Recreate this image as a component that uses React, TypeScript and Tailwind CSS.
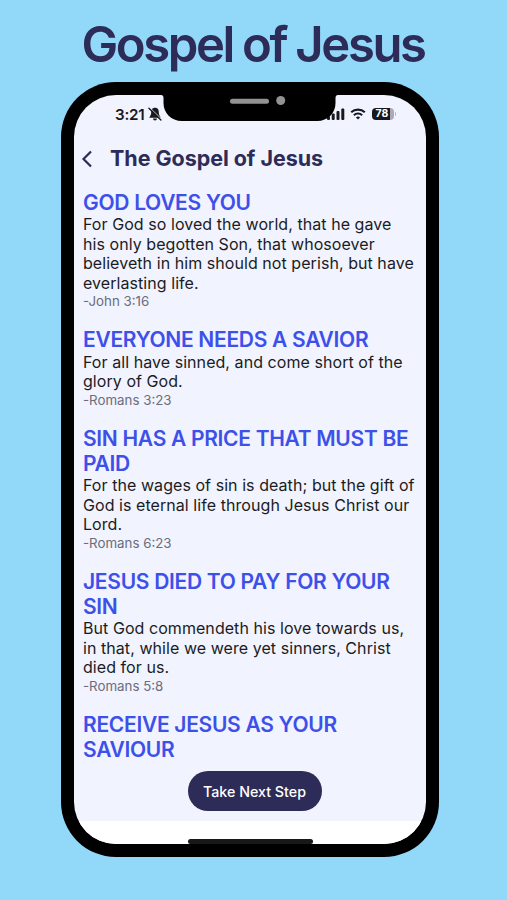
const SECTIONS = [
  {
    title: ['GOD LOVES YOU'],
    lines: [
      'For God so loved the world, that he gave',
      'his only begotten Son, that whosoever',
      'believeth in him should not perish, but have',
      'everlasting life.',
    ],
    verse: '-John 3:16',
  },
  {
    title: ['EVERYONE NEEDS A SAVIOR'],
    lines: ['For all have sinned, and come short of the', 'glory of God.'],
    verse: '-Romans 3:23',
  },
  {
    title: ['SIN HAS A PRICE THAT MUST BE', 'PAID'],
    lines: [
      'For the wages of sin is death; but the gift of',
      'God is eternal life through Jesus Christ our',
      'Lord.',
    ],
    verse: '-Romans 6:23',
  },
  {
    title: ['JESUS DIED TO PAY FOR YOUR', 'SIN'],
    lines: [
      'But God commendeth his love towards us,',
      'in that, while we were yet sinners, Christ',
      'died for us.',
    ],
    verse: '-Romans 5:8',
  },
  { title: ['RECEIVE JESUS AS YOUR', 'SAVIOUR'], lines: [], verse: '' },
];

function Notch() {
  return (
    <div className="absolute left-[83px] top-0 h-[26px] w-[185px]">
      <svg width="185" height="26" viewBox="0 0 185 26">
        <path
          d="M0 -1V0H4Q6.500 0 6.500 3V8C6.500 18 14 26 25 26H160C171 26 178.500 18 178.500 8V3Q178.500 0 181 0H185V-1Z"
          fill="#000"
        />
        <rect x="73" y="3.700" width="39" height="5" rx="2.500" fill="#929292" />
        <circle cx="123.700" cy="5.500" r="4.500" fill="#929292" />
      </svg>
    </div>
  );
}

function StatusBar() {
  return (
    <div className="flex h-[38px] items-center pl-[41px] pr-[30px] text-[#18191f]">
      <span className="w-[31px] pt-px text-[15.2px] font-semibold leading-none tracking-[-0.2px]">3:21</span>
      <svg width="14" height="14" viewBox="0 0 14 14" className="ml-[1.5px]">
        <path d="M7 0.8C4 0.8 3.200 3 3.200 5.500C3.200 8 2.200 8.700 1.200 10.800H12.800C11.800 8.700 10.800 8 10.800 5.500C10.800 3 10 0.8 7 0.8Z" fill="currentColor" />
        <path d="M5 11.500a2 2 0 0 0 4 0Z" fill="currentColor" />
        <path d="M1.800 0.600L13.800 12.300" stroke="#f1f3ff" strokeWidth="0.900" />
        <path d="M0.900 1.300L12.900 13" stroke="currentColor" strokeWidth="1.400" strokeLinecap="round" />
      </svg>
      <div className="ml-auto flex items-center">
        <svg width="18" height="12" viewBox="0 0 18 12" fill="currentColor">
          <rect x="0" y="8" width="3" height="4" rx="1" />
          <rect x="4.700" y="5.500" width="3" height="6.500" rx="1" />
          <rect x="9.500" y="3" width="3" height="9" rx="1" />
          <rect x="14.300" y="0.500" width="3" height="11.500" rx="1" />
        </svg>
        <svg width="16" height="12" viewBox="0 0 16 12" className="ml-[5px]" fill="none" stroke="currentColor" strokeWidth="2.100">
          <path d="M1.200 4.300C5 0.700 11 0.700 14.800 4.300" />
          <path d="M3.900 7.200C6.200 5 9.800 5 12.100 7.200" />
          <path d="M8 11.500L5.900 9.400Q8 7.700 10.100 9.400Z" fill="currentColor" stroke="none" />
        </svg>
        <div className="ml-[6px] flex items-center">
          <div className="flex h-[12px] w-[22px] items-center overflow-hidden rounded-[4px] bg-[linear-gradient(90deg,#18191f_18px,#a9abb6_18px)] pl-[4px] pt-px text-[10.5px] font-bold leading-none text-white">
            78
          </div>
          <div className="ml-px h-[4px] w-[1.5px] rounded-r-full bg-[#b4b6c1]" />
        </div>
      </div>
    </div>
  );
}

export default function App() {
  return (
    <div className="flex h-[900px] w-[507px] flex-col bg-[#92d8f8] pl-[61px] font-['Inter','Liberation_Sans',sans-serif]">
      <h1 className="h-[82px] w-[378px] whitespace-nowrap pl-[20.5px] pt-[17px] text-[49px] font-semibold leading-[56px] tracking-[-2.4px] text-[#2d2b57] [word-spacing:-0.8px]">
        Gospel of Jesus
      </h1>

      <div className="h-[774.5px] w-[378px] rounded-[55px] bg-black p-[13px]">
        <div className="relative flex h-full flex-col overflow-hidden rounded-[42px] bg-[#f1f3ff]">
          <StatusBar />
          <Notch />

          <header className="flex h-[52px] items-center pl-[7px] text-[#2d2b57]">
            <svg width="12" height="18" viewBox="0 0 12 18" fill="none" stroke="currentColor" strokeWidth="2.200">
              <path d="M10 1.500L2.500 9L10 16.500" />
            </svg>
            <h2 className="ml-[17px] text-[21.5px] font-bold leading-none tracking-[-0.05px]">The Gospel of Jesus</h2>
          </header>

          <main className="flex flex-1 flex-col gap-[17.5px] overflow-hidden whitespace-nowrap pl-[9px] pt-[4.8px]">
            {SECTIONS.map(({ title, lines, verse }) => (
              <section key={title[0]}>
                <h3 className="text-[21px] font-semibold leading-[25px] tracking-[-0.3px] text-[#3d50ea]">
                  {title.map((line) => (
                    <span key={line} className="block">{line}</span>
                  ))}
                </h3>
                <p className="pt-[0.5px] text-[16px] leading-[19.5px] tracking-[0.06px] text-[#1b1c22]">
                  {lines.map((line) => (
                    <span key={line} className="block">{line}</span>
                  ))}
                </p>
                {verse && <p className="text-[13.3px] leading-[16.5px] text-[#6b6d7a]">{verse}</p>}
              </section>
            ))}
          </main>

          {/* Call to action */}
          <div className="flex h-[50px] shrink-0 items-start pl-[113.5px] pt-[0.5px]">
            <button className="h-[39.5px] w-[134px] rounded-full bg-[#2d2b57] pt-px text-[14.25px] font-medium text-white">
              Take Next Step
            </button>
          </div>
          <div className="flex h-[23px] shrink-0 items-end bg-white pl-[113.5px]">
            <div className="h-[5px] w-[125px] rounded-[2.5px] bg-[#17181a]" />
          </div>
        </div>
      </div>
    </div>
  );
}
